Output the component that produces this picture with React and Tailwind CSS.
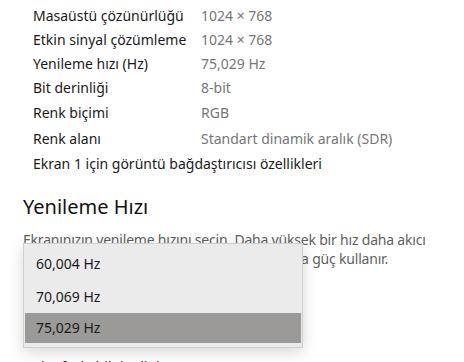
export default function App() {
  const rows = [
    ["Masaüstü çözünürlüğü", "1024 × 768", "h-[24px]"],
    ["Etkin sinyal çözümleme", "1024 × 768", "h-[24px]"],
    ["Yenileme hızı (Hz)", "75,029 Hz", "h-[24px]"],
    ["Bit derinliği", "8-bit", "h-[25px]"],
    ["Renk biçimi", "RGB", "h-[25px]"],
    ["Renk alanı", "Standart dinamik aralık (SDR)", "h-[26px]"],
  ];
  return (
    <div className="relative w-[464px] h-[362px] overflow-hidden bg-white text-[14px] text-[#1a1a1a]" style={{ fontFamily: '"Noto Sans", "Open Sans", sans-serif' }}>
      <div className="pl-[33px] pt-[3px]">
        {rows.map(([k, v, h], i) => (
          <div key={i} className={`flex ${h} items-center`}>
            <div className="w-[168px]">{k}</div>
            <div className="text-[#767676]">{v}</div>
          </div>
        ))}
        <div className="h-[25px] flex items-center">Ekran 1 için görüntü bağdaştırıcısı özellikleri</div>
      </div>
      <div className="pl-[23px] pt-[17px]">
        <div className="text-[20px] leading-[28px] text-[#111]">Yenileme Hızı</div>
        <div className="mt-[9px] w-[412px] text-[#5f5f5f] leading-[19px] tracking-[-0.2px]">
          Ekranınızın yenileme hızını seçin. Daha yüksek bir hız daha akıcı harekete olanak tanır ancak bu da daha fazla güç kullanır.
        </div>
        <div className="mt-[88px] text-[#1a1a1a]">Daha fazla bilgi edinin</div>
      </div>
      <div className="absolute left-[23px] top-[243px] w-[280px] h-[105px] bg-[#ebebeb] border border-[#d0d0d0] shadow-[0_4px_14px_rgba(0,0,0,0.16)] px-[1px] pt-[3px] flex flex-col">
        <div className="h-[33px] flex items-center pl-[11px] pb-[1px] text-[#1a1a1a]">60,004 Hz</div>
        <div className="h-[33px] flex items-center pl-[11px] pb-[1px] text-[#1a1a1a]">70,069 Hz</div>
        <div className="h-[30px] flex items-center pl-[11px] pb-[1px] bg-[#9b9a98] text-[#1a1a1a]">75,029 Hz</div>
      </div>
    </div>
  );
}
